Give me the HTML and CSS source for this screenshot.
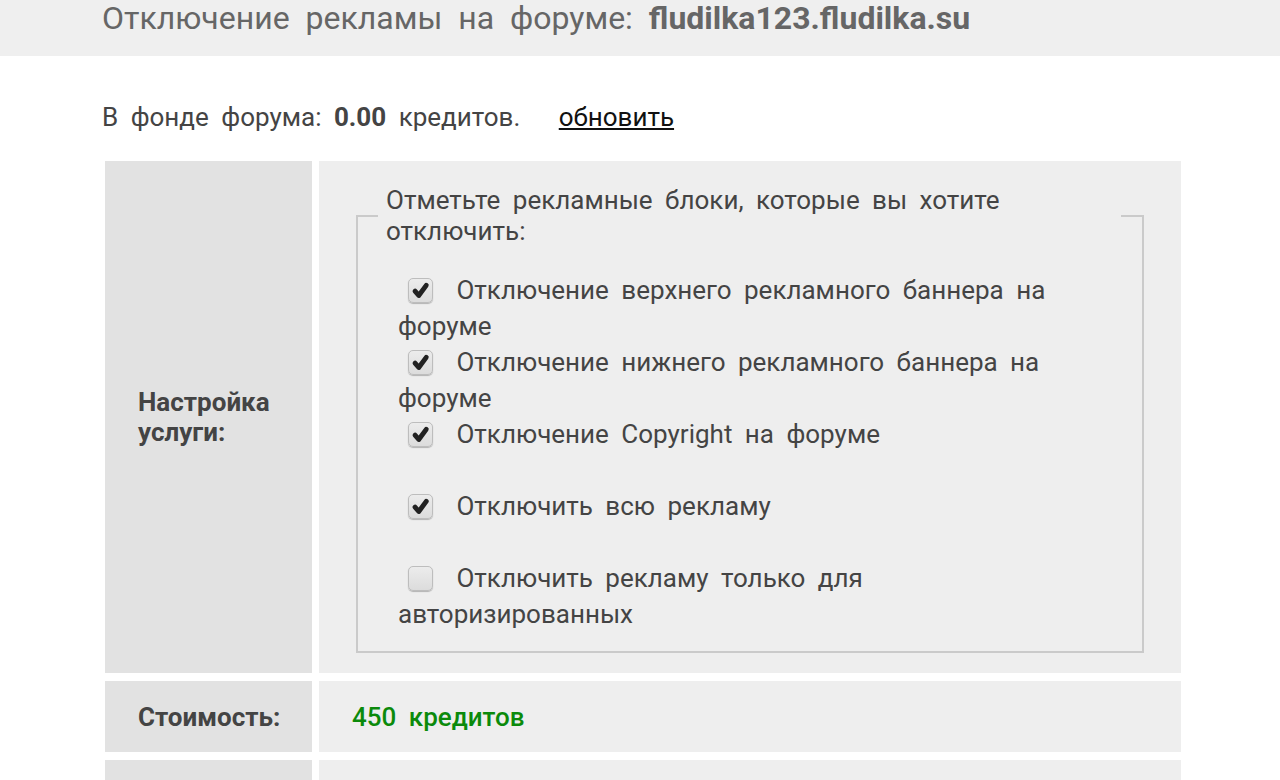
FILE: index.html
```html
<!DOCTYPE html>
<html lang="ru">
<head>
  <meta charset="UTF-8">
  <title>Отключение рекламы на форуме</title>
  <link rel="stylesheet" href="styles.css">
</head>
<body>
  <header class="page-head">
    <h1>Отключение рекламы на форуме: <b>fludilka123.fludilka.su</b></h1>
  </header>

  <div class="content">
    <p class="fund">В фонде форума: <b>0.00</b> кредитов. <a href="#" class="refresh">обновить</a></p>

    <div class="settings">
      <div class="label-cell">Настройка услуги:</div>
      <div class="value-cell">
        <fieldset class="blocks">
          <legend>Отметьте рекламные блоки, которые вы хотите отключить:</legend>
          <label class="option"><span class="cb"><svg viewBox="0 0 16 16"><path d="M4.2 8.4l2.6 3.1L12 4.4" /></svg></span> Отключение верхнего рекламного баннера на форуме</label>
          <label class="option"><span class="cb"><svg viewBox="0 0 16 16"><path d="M4.2 8.4l2.6 3.1L12 4.4" /></svg></span> Отключение нижнего рекламного баннера на форуме</label>
          <label class="option"><span class="cb"><svg viewBox="0 0 16 16"><path d="M4.2 8.4l2.6 3.1L12 4.4" /></svg></span> Отключение Copyright на форуме</label>
          <label class="option"><span class="cb"><svg viewBox="0 0 16 16"><path d="M4.2 8.4l2.6 3.1L12 4.4" /></svg></span> Отключить всю рекламу</label>
          <label class="option"><span class="cb"></span> Отключить рекламу только для авторизированных</label>
        </fieldset>
      </div>

      <div class="label-cell">Стоимость:</div>
      <div class="value-cell short"><span class="price">450 кредитов</span></div>

      <div class="label-cell"></div>
      <div class="value-cell short"></div>
    </div>
  </div>
</body>
</html>
```

FILE: styles.css
```css
/* Base */
body {
  margin: 0;
  font-family: Roboto, "Noto Sans", sans-serif;
  font-size: 26px;
  color: #444;
  word-spacing: 6px;
  background: #fff;
}

/* Header */
.page-head {
  height: 56px;
  background: #efefef;
  padding: 0 102px;
  overflow: hidden;
}

.page-head h1 {
  margin: -2px 0 0 0;
  font-size: 32px;
  line-height: 40px;
  font-weight: normal;
  word-spacing: 8px;
  color: #666;
}

.page-head h1 b {
  font-weight: bold;
}

/* Content */
.content {
  padding: 0 99px 0 102px;
}

.fund {
  margin: 0 0 27px 0;
  padding-top: 44px;
  line-height: 34px;
  color: #444;
}

.fund b {
  font-weight: bold;
}

.fund .refresh {
  margin-left: 26px;
  color: #111;
}

/* Settings grid */
.settings {
  margin-left: 3px;
  display: grid;
  grid-template-columns: 207px minmax(0, 1fr);
  grid-template-rows: auto 71px 71px;
  column-gap: 7px;
  row-gap: 8px;
}

.label-cell {
  background: #e2e2e2;
  display: flex;
  align-items: center;
  padding: 0 20px 0 33px;
  font-weight: bold;
  line-height: 30px;
}

.value-cell {
  background: #eeeeee;
  padding: 24px 37px 20px 37px;
}

.value-cell.short {
  padding: 0 33px;
  display: flex;
  align-items: center;
}

.price {
  color: #0b8a0b;
  font-weight: 500;
}

/* Fieldset with options */
.blocks {
  margin: 0;
  min-width: 0;
  border: 2px solid #cacaca;
  padding: 25px 21px 19px 20px;
}

.blocks legend {
  padding: 0 8px;
  line-height: 31px;
  color: #444;
}

.option {
  display: block;
  padding: 0 19px 0 20px;
  line-height: 36px;
  min-height: 72px;
}

.cb {
  display: inline-block;
  vertical-align: -4px;
  width: 25px;
  height: 25px;
  margin-left: 10px;
  margin-right: 11px;
  border: 1px solid #bdbdbd;
  border-radius: 5px;
  background: linear-gradient(#ececec, #dcdcdc);
  box-shadow: 0 1px 1px rgba(0, 0, 0, 0.25);
  box-sizing: border-box;
}

.cb svg {
  display: block;
  width: 100%;
  height: 100%;
  fill: none;
  stroke: #222;
  stroke-width: 3.4;
  stroke-linecap: round;
  stroke-linejoin: round;
}
```
